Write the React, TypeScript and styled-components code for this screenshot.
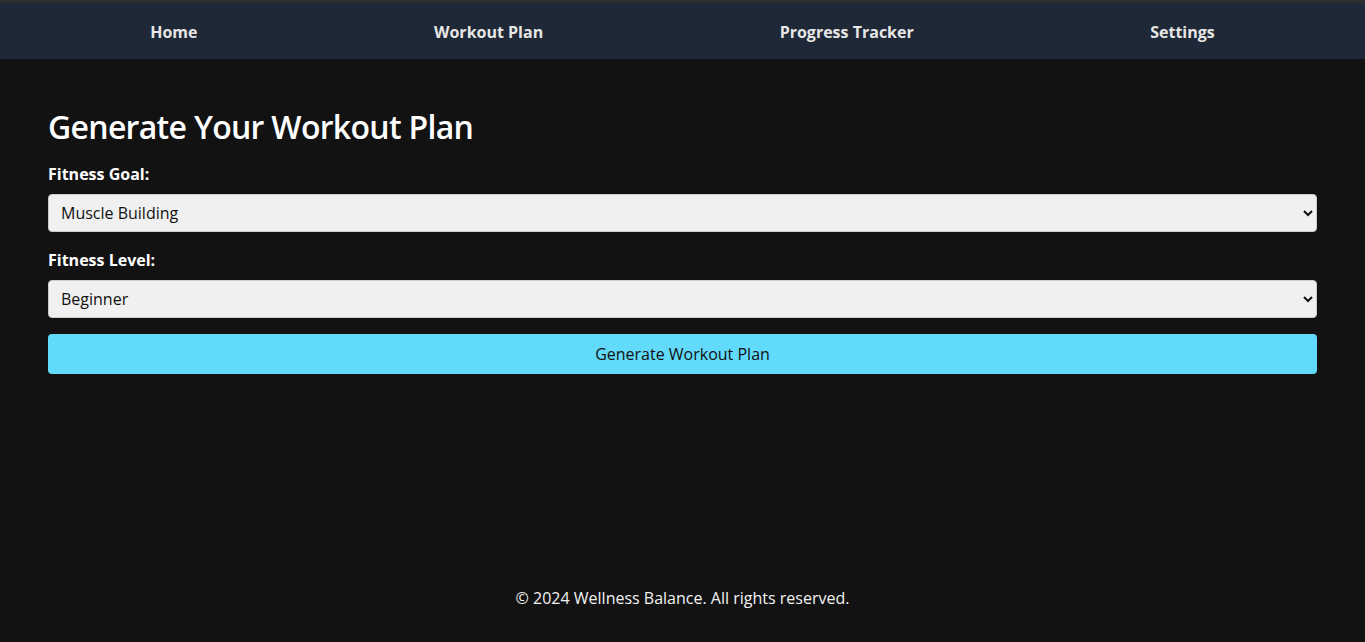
import React from "react";
import styled, { createGlobalStyle } from "styled-components";

const GlobalStyle = createGlobalStyle`
  * { box-sizing: border-box; }
  html, body { margin: 0; padding: 0; background: #121212; }
  body {
    font-family: "Open Sans", "Noto Sans", sans-serif;
    color: #ffffff;
    border-top: 3px solid #2e2e2e;
  }
`;

const Page = styled.div`
  min-height: calc(100vh - 3px);
  display: flex;
  flex-direction: column;
`;

const Nav = styled.nav`
  background: #1f2836;
  height: 56px;
  padding: 2px 32px 0;
`;

const NavList = styled.ul`
  list-style: none;
  margin: 0;
  padding: 0;
  height: 100%;
  display: flex;
  justify-content: space-around;
  align-items: center;
`;

const NavLink = styled.a`
  color: #e6e6e6;
  font-weight: 700;
  font-size: 16px;
  text-decoration: none;
`;

const Main = styled.main`
  flex: 1;
  padding: 46px 48px 0;
  display: flex;
  flex-direction: column;
`;

const Title = styled.h1`
  margin: 0 0 14px;
  font-size: 32px;
  font-weight: 600;
  letter-spacing: -0.7px;
  line-height: 44px;
`;

const Label = styled.label`
  display: block;
  font-weight: 700;
  font-size: 16px;
  line-height: 22px;
  margin-bottom: 9px;
`;

const Select = styled.select<{ $mb: number }>`
  width: 100%;
  height: 38px;
  padding: 0 8px;
  font-family: inherit;
  font-size: 16px;
  color: #111;
  background: #f0f0f0;
  border: 1px solid #cccccc;
  border-radius: 4px;
  margin-bottom: ${(p) => p.$mb}px;
`;

const Button = styled.button`
  width: 100%;
  height: 40px;
  background: #61dafb;
  border: none;
  border-radius: 4px;
  font-family: inherit;
  font-size: 16px;
  color: #111;
  cursor: pointer;
`;

const Footer = styled.footer`
  text-align: center;
  color: #f2f2f2;
  font-size: 16px;
  padding: 0 0 33px;
`;

export default function App() {
  return (
    <>
      <GlobalStyle />
      <Page>
        <Nav>
          <NavList>
            <li><NavLink href="#">Home</NavLink></li>
            <li><NavLink href="#">Workout Plan</NavLink></li>
            <li><NavLink href="#">Progress Tracker</NavLink></li>
            <li><NavLink href="#">Settings</NavLink></li>
          </NavList>
        </Nav>
        <Main>
          <Title>Generate Your Workout Plan</Title>
          <Label htmlFor="goal">Fitness Goal:</Label>
          <Select id="goal" $mb={17} defaultValue="muscle">
            <option value="muscle">Muscle Building</option>
            <option value="weight">Weight Loss</option>
            <option value="endurance">Endurance</option>
          </Select>
          <Label htmlFor="level">Fitness Level:</Label>
          <Select id="level" $mb={16} defaultValue="beginner">
            <option value="beginner">Beginner</option>
            <option value="intermediate">Intermediate</option>
            <option value="advanced">Advanced</option>
          </Select>
          <Button type="button">Generate Workout Plan</Button>
        </Main>
        <Footer>© 2024 Wellness Balance. All rights reserved.</Footer>
      </Page>
    </>
  );
}
